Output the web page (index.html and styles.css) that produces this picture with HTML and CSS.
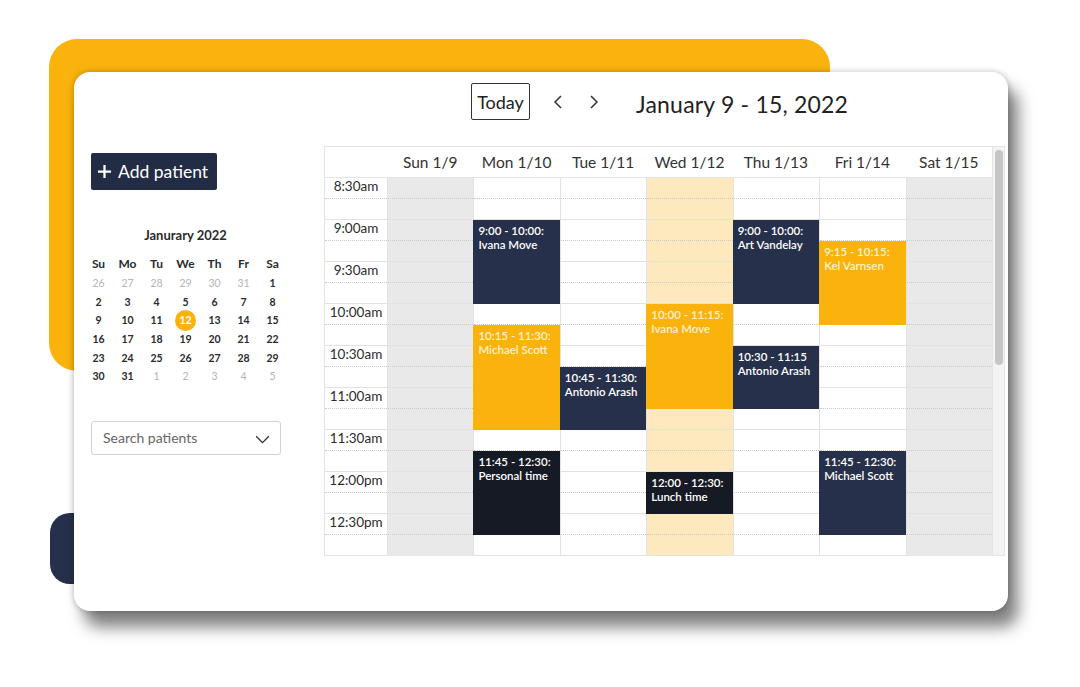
FILE: index.html
```html
<!DOCTYPE html>
<html>
<head>
<meta charset="utf-8">
<link rel="stylesheet" href="styles.css">
</head>
<body>
<div class="stage">
  <div class="deco deco-yellow"></div>
  <div class="deco deco-navy"></div>
  <div class="card">
    <aside class="sidebar">
      <button class="add-btn"><svg class="plus" viewBox="0 0 16 16" width="15" height="15"><path d="M8 1v14M1 8h14" stroke="#fff" stroke-width="2.4" fill="none"/></svg>Add patient</button>
      <div class="minical">
        <div class="mc-title">Janurary 2022</div>
        <div class="mc-grid">
          <span class="mc-h">Su</span><span class="mc-h">Mo</span><span class="mc-h">Tu</span><span class="mc-h">We</span><span class="mc-h">Th</span><span class="mc-h">Fr</span><span class="mc-h">Sa</span>
          <span class="mc-d out">26</span><span class="mc-d out">27</span><span class="mc-d out">28</span><span class="mc-d out">29</span><span class="mc-d out">30</span><span class="mc-d out">31</span><span class="mc-d">1</span>
          <span class="mc-d">2</span><span class="mc-d">3</span><span class="mc-d">4</span><span class="mc-d">5</span><span class="mc-d">6</span><span class="mc-d">7</span><span class="mc-d">8</span>
          <span class="mc-d">9</span><span class="mc-d">10</span><span class="mc-d">11</span><span class="mc-d today"><b>12</b></span><span class="mc-d">13</span><span class="mc-d">14</span><span class="mc-d">15</span>
          <span class="mc-d">16</span><span class="mc-d">17</span><span class="mc-d">18</span><span class="mc-d">19</span><span class="mc-d">20</span><span class="mc-d">21</span><span class="mc-d">22</span>
          <span class="mc-d">23</span><span class="mc-d">24</span><span class="mc-d">25</span><span class="mc-d">26</span><span class="mc-d">27</span><span class="mc-d">28</span><span class="mc-d">29</span>
          <span class="mc-d">30</span><span class="mc-d">31</span><span class="mc-d out">1</span><span class="mc-d out">2</span><span class="mc-d out">3</span><span class="mc-d out">4</span><span class="mc-d out">5</span>
        </div>
      </div>
      <div class="search">
        <span class="search-text">Search patients</span>
        <svg class="chev" viewBox="0 0 16 10" width="15" height="9"><path d="M1 1.5l7 7 7-7" stroke="#333" stroke-width="1.5" fill="none"/></svg>
      </div>
    </aside>

    <header class="toolbar">
      <button class="today-btn">Today</button>
      <svg class="nav-arrow prev" viewBox="0 0 10 16" width="10" height="16"><path d="M8 2L2 8l6 6" stroke="#333" stroke-width="1.5" fill="none"/></svg>
      <svg class="nav-arrow next" viewBox="0 0 10 16" width="10" height="16"><path d="M2 2l6 6-6 6" stroke="#333" stroke-width="1.5" fill="none"/></svg>
      <h1 class="range">January 9 - 15, 2022</h1>
    </header>

    <section class="cal">
      <div class="cal-main">
        <div class="cal-head">
          <div class="hcell"></div>
          <div class="hcell">Sun 1/9</div>
          <div class="hcell">Mon 1/10</div>
          <div class="hcell">Tue 1/11</div>
          <div class="hcell">Wed 1/12</div>
          <div class="hcell">Thu 1/13</div>
          <div class="hcell">Fri 1/14</div>
          <div class="hcell">Sat 1/15</div>
        </div>
        <div class="cal-body">
          <div class="col times">
            <div class="slot"><span class="tl">8:30am</span></div>
            <div class="slot"><span class="tl">9:00am</span></div>
            <div class="slot"><span class="tl">9:30am</span></div>
            <div class="slot"><span class="tl">10:00am</span></div>
            <div class="slot"><span class="tl">10:30am</span></div>
            <div class="slot"><span class="tl">11:00am</span></div>
            <div class="slot"><span class="tl">11:30am</span></div>
            <div class="slot"><span class="tl">12:00pm</span></div>
            <div class="slot"><span class="tl">12:30pm</span></div>
          </div>
          <div class="col day weekend">
            <div class="slot"></div><div class="slot"></div><div class="slot"></div><div class="slot"></div><div class="slot"></div><div class="slot"></div><div class="slot"></div><div class="slot"></div><div class="slot"></div>
          </div>
          <div class="col day">
            <div class="slot"></div><div class="slot"></div><div class="slot"></div><div class="slot"></div><div class="slot"></div><div class="slot"></div><div class="slot"></div><div class="slot"></div><div class="slot"></div>
            <div class="ev navy" style="top:42px;height:84px">9:00 - 10:00:<br>Ivana Move</div>
            <div class="ev yellow" style="top:147px;height:105px">10:15 - 11:30:<br>Michael Scott</div>
            <div class="ev dark" style="top:273px;height:84px">11:45 - 12:30:<br>Personal time</div>
          </div>
          <div class="col day">
            <div class="slot"></div><div class="slot"></div><div class="slot"></div><div class="slot"></div><div class="slot"></div><div class="slot"></div><div class="slot"></div><div class="slot"></div><div class="slot"></div>
            <div class="ev navy" style="top:189px;height:63px">10:45 - 11:30:<br>Antonio Arash</div>
          </div>
          <div class="col day current">
            <div class="slot"></div><div class="slot"></div><div class="slot"></div><div class="slot"></div><div class="slot"></div><div class="slot"></div><div class="slot"></div><div class="slot"></div><div class="slot"></div>
            <div class="ev yellow" style="top:126px;height:105px">10:00 - 11:15:<br>Ivana Move</div>
            <div class="ev dark" style="top:294px;height:42px">12:00 - 12:30:<br>Lunch time</div>
          </div>
          <div class="col day">
            <div class="slot"></div><div class="slot"></div><div class="slot"></div><div class="slot"></div><div class="slot"></div><div class="slot"></div><div class="slot"></div><div class="slot"></div><div class="slot"></div>
            <div class="ev navy" style="top:42px;height:84px">9:00 - 10:00:<br>Art Vandelay</div>
            <div class="ev navy" style="top:168px;height:63px">10:30 - 11:15<br>Antonio Arash</div>
          </div>
          <div class="col day">
            <div class="slot"></div><div class="slot"></div><div class="slot"></div><div class="slot"></div><div class="slot"></div><div class="slot"></div><div class="slot"></div><div class="slot"></div><div class="slot"></div>
            <div class="ev yellow" style="top:63px;height:84px">9:15 - 10:15:<br>Kel Varnsen</div>
            <div class="ev navy" style="top:273px;height:84px">11:45 - 12:30:<br>Michael Scott</div>
          </div>
          <div class="col day weekend">
            <div class="slot"></div><div class="slot"></div><div class="slot"></div><div class="slot"></div><div class="slot"></div><div class="slot"></div><div class="slot"></div><div class="slot"></div><div class="slot"></div>
          </div>
        </div>
      </div>
      <div class="scrollbar"><div class="thumb"></div></div>
    </section>
  </div>
</div>
</body>
</html>
```

FILE: styles.css
```css
* { box-sizing: border-box; }
html, body { margin: 0; padding: 0; background: #fff; }
body { font-family: "Lato", "Open Sans", sans-serif; color: #2b2b2b; }

.stage {
  position: relative;
  width: 1080px;
  height: 687px;
  overflow: hidden;
  padding-top: 72px;
  padding-left: 74px;
}

.deco { position: absolute; z-index: 0; }
.deco-yellow {
  left: 49px; top: 39px;
  width: 781px; height: 332px;
  background: #f9b30c;
  border-radius: 28px;
}
.deco-navy {
  left: 50px; top: 513px;
  width: 150px; height: 71px;
  background: #25304a;
  border-radius: 20px;
}

.card {
  position: relative;
  z-index: 1;
  width: 934px;
  height: 539px;
  background: #fff;
  border-radius: 16px;
  box-shadow: 0 0 6px rgba(0,0,0,0.25), 10px 16px 16px rgba(0,0,0,0.5);
  display: grid;
  grid-template-columns: 250px 681px;
  grid-template-rows: 74px 410px;
}

/* Sidebar */
.sidebar {
  grid-row: 1 / 3;
  grid-column: 1;
  padding: 81px 0 0 17px;
}
.add-btn {
  display: flex;
  align-items: center;
  gap: 6px;
  width: 126px;
  height: 37px;
  padding: 0 0 0 6px;
  border: none;
  border-radius: 2px;
  background: #222c45;
  color: #fff;
  font-family: inherit;
  font-size: 17.5px;
  cursor: pointer;
}
.plus { flex: none; }

.minical { margin: 37px 0 0 -7px; width: 203px; }
.mc-title {
  text-align: center;
  font-weight: 700;
  font-size: 13px;
  line-height: 17px;
  color: #2b2b2b;
}
.mc-grid {
  margin-top: 9px;
  display: grid;
  grid-template-columns: repeat(7, 29px);
  grid-auto-rows: 18.6px;
  grid-template-rows: 21px;
}
.mc-h, .mc-d {
  display: flex;
  align-items: center;
  justify-content: center;
  font-weight: 700;
  color: #2b2b2b;
}
.mc-h { font-size: 12px; }
.mc-d { font-size: 10.5px; }
.mc-d.out { color: #b5b5b5; font-weight: 400; }
.mc-d.today b {
  display: flex;
  align-items: center;
  justify-content: center;
  width: 21px; height: 21px;
  border-radius: 50%;
  background: #f9b30c;
  color: #fff;
  font-weight: 700;
}

.search {
  margin-top: 35px;
  width: 190px;
  height: 34px;
  border: 1px solid #d2d2d2;
  border-radius: 3px;
  display: flex;
  align-items: center;
  justify-content: space-between;
  padding: 0 10px 0 11px;
}
.search-text { font-size: 14px; color: #666; }
.chev { margin-top: 4px; }

/* Toolbar */
.toolbar {
  grid-row: 1;
  grid-column: 2;
  display: flex;
  align-items: center;
  align-self: start;
  margin-top: 11px;
  height: 37px;
  padding-left: 147px;
}
.today-btn {
  width: 59px;
  height: 37px;
  padding: 0;
  border: 1px solid #333;
  border-radius: 2px;
  background: #fff;
  font-family: inherit;
  font-size: 18px;
  color: #222;
}
.nav-arrow.prev { margin-left: 23px; }
.nav-arrow.next { margin-left: 26px; }
.range {
  margin: 5px 0 0 37px;
  font-size: 23px;
  font-weight: 400;
  color: #222;
  letter-spacing: 0.2px;
}

/* Calendar */
.cal {
  grid-row: 2;
  grid-column: 2;
  display: flex;
  border: 1px solid #e4e4e4;
}
.cal-main { flex: 1; display: flex; flex-direction: column; }
.cal-head, .cal-body {
  display: grid;
  grid-template-columns: 62px repeat(7, 1fr);
}
.cal-head { height: 31px; border-bottom: 1px solid #e4e4e4; }
.hcell {
  text-align: center;
  line-height: 31px;
  font-size: 15.5px;
  color: #333;
}
.col { position: relative; }
.day { border-left: 1px solid #e2e2e2; }
.weekend { background: #e9e9e9; }
.current { background: #fde9bd; }
.slot {
  position: relative;
  height: 42px;
  border-bottom: 1px solid #e2e2e2;
}
.slot:last-child { border-bottom: none; }
.slot::after {
  content: "";
  position: absolute;
  left: 0; right: 0; top: 20px;
  border-top: 1px dotted #c9c9c9;
}
.tl {
  display: block;
  text-align: center;
  font-size: 13.5px;
  line-height: 17px;
  color: #2b2b2b;
}

.ev {
  position: absolute;
  left: -1px; right: 0;
  z-index: 2;
  padding: 4px 5px;
  font-size: 11.5px;
  line-height: 14px;
  font-weight: 600;
  color: #fff;
}
.ev.navy { background: #26304a; }
.ev.dark { background: #151a25; }
.ev.yellow { background: #f9b30c; color: #fdf1d4; }

.scrollbar {
  width: 12px;
  background: #f3f3f3;
  border-left: 1px solid #e4e4e4;
  padding: 3px 1px 0 2px;
}
.thumb {
  height: 215px;
  background: #c6c6c6;
  border-radius: 4px;
}
```
